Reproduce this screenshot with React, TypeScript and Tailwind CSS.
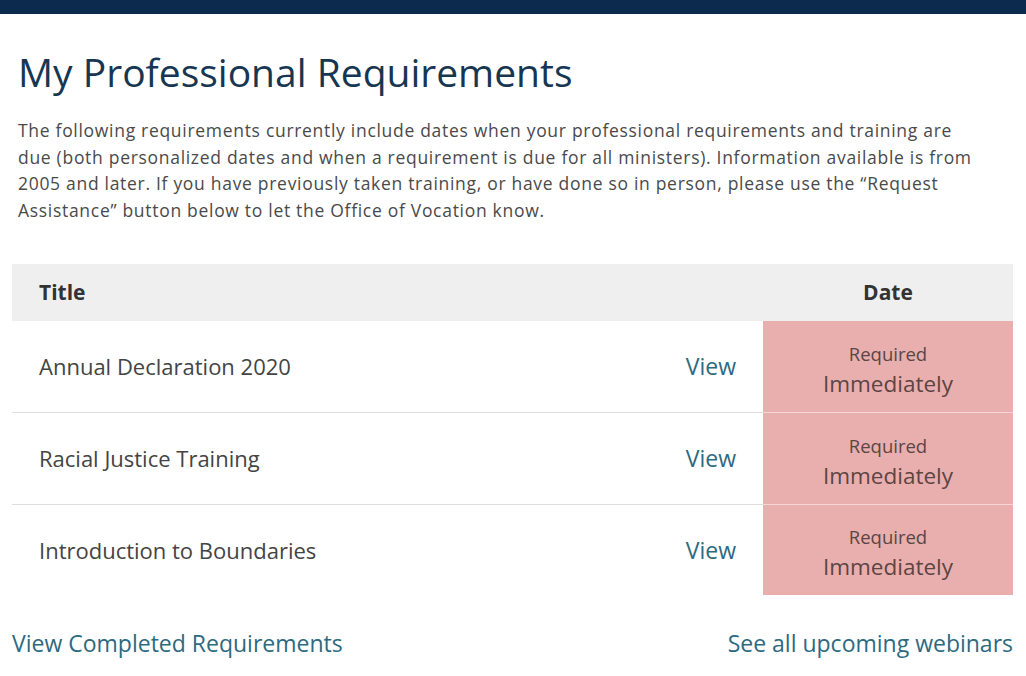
const rows = [
  'Annual Declaration 2020',
  'Racial Justice Training',
  'Introduction to Boundaries',
]

export default function App() {
  return (
    <div className="w-[1026px] h-[676px] bg-white font-['Open_Sans',sans-serif] overflow-hidden">
      <div className="h-[14px] bg-[#0c2a4d]" />

      <div className="px-[12px]">
        <h1 className="mt-[33px] ml-[6px] text-[39px] leading-[50px] text-[#163652]">
          My Professional Requirements
        </h1>

        <p className="mt-[20px] ml-[6px] whitespace-nowrap text-[17.5px] leading-[26.5px] text-[#4a4a4a] tracking-[0.7px]">
          The following requirements currently include dates when your professional requirements and training are
          <br />
          due (both personalized dates and when a requirement is due for all ministers). Information available is from
          <br />
          2005 and later. If you have previously taken training, or have done so in person, please use the “Request
          <br />
          Assistance” button below to let the Office of Vocation know.
        </p>

        {/* Table */}
        <div className="mt-[41px] w-[1001px]">
          <div className="flex h-[57px] items-center bg-[#efefef]">
            <div className="flex-1 pl-[27px] text-[21px] font-bold text-[#333]">Title</div>
            <div className="w-[250px] text-center text-[21px] font-bold text-[#333]">Date</div>
          </div>

          {rows.map((title, index) => (
            <div key={title} className={`flex ${index === 2 ? 'h-[90px]' : 'h-[92px]'}`}>
              <div
                className={`flex flex-1 items-center justify-between pl-[27px] pr-[27px] ${
                  index < rows.length - 1 ? 'border-b border-[#dedede]' : ''
                }`}
              >
                <span className="text-[22px] text-[#444]">{title}</span>
                <span className="text-[23px] text-[#2d6a7f]">View</span>
              </div>
              <div
                className={`flex w-[250px] flex-col items-center justify-center bg-[#e9afae] text-[#5b4545] ${
                  index < rows.length - 1 ? 'border-b border-[#f4d6d6]' : ''
                }`}
              >
                <span className="text-[18.5px] leading-[34px]">Required</span>
                <span className="text-[22.5px] leading-[26px]">Immediately</span>
              </div>
            </div>
          ))}
        </div>

        {/* Footer links */}
        <div className="mt-[31px] flex w-[1001px] justify-between text-[23px] text-[#2d6a7f]">
          <span>View Completed Requirements</span>
          <span>See all upcoming webinars</span>
        </div>
      </div>
    </div>
  )
}
